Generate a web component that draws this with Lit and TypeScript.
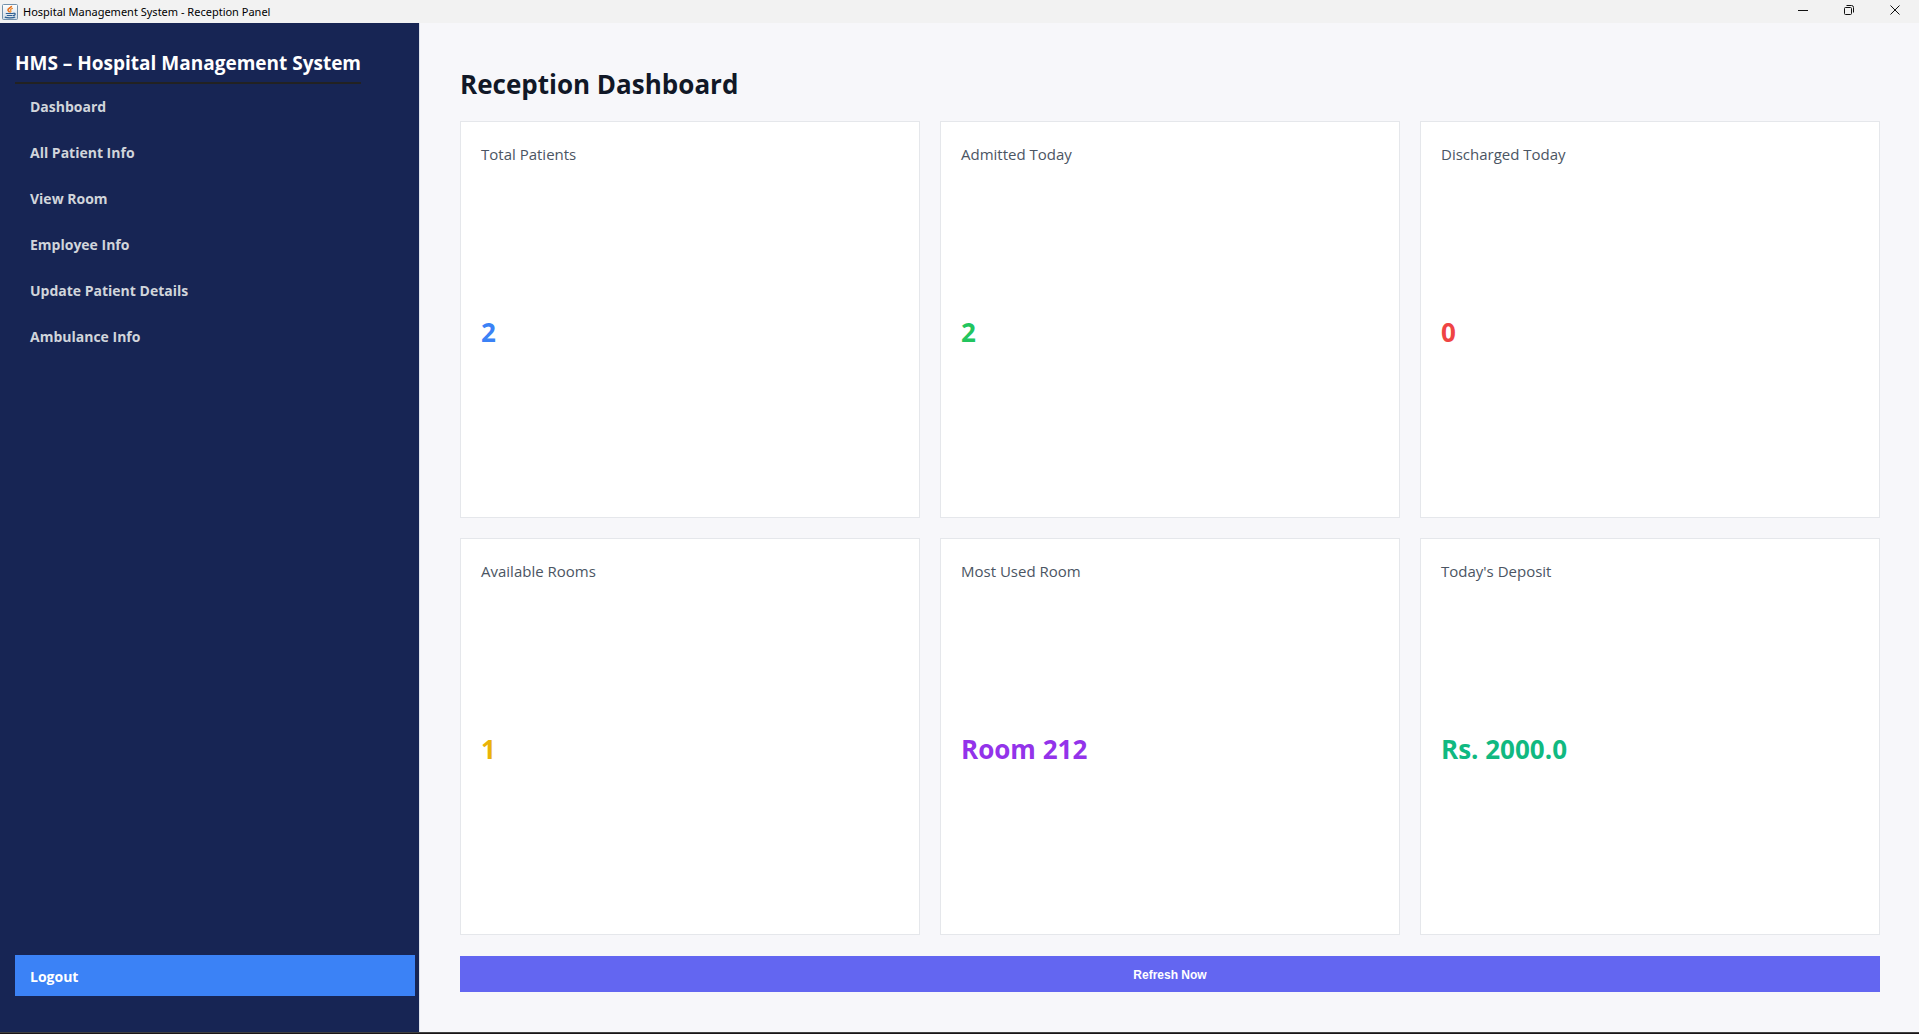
import { LitElement, html, css, svg } from "lit";
import { customElement, state } from "lit/decorators.js";
import { classMap } from "lit/directives/class-map.js";

interface Stat {
  label: string;
  value: string;
  tone: string;
}

const NAV = [
  "Dashboard",
  "All Patient Info",
  "View Room",
  "Employee Info",
  "Update Patient Details",
  "Ambulance Info",
];

const STATS: Stat[] = [
  { label: "Total Patients", value: "2", tone: "blue" },
  { label: "Admitted Today", value: "2", tone: "green" },
  { label: "Discharged Today", value: "0", tone: "red" },
  { label: "Available Rooms", value: "1", tone: "yellow" },
  { label: "Most Used Room", value: "Room 212", tone: "purple" },
  { label: "Today's Deposit", value: "Rs. 2000.0", tone: "emerald" },
];

const CONTROLS = [
  { name: "Minimize", shape: svg`<path d="M0 5.5H10" />` },
  {
    name: "Restore",
    shape: svg`<rect x="0.5" y="2.5" width="7" height="7" rx="1" /><path d="M2.5 0.5H7.5A2 2 0 0 1 9.5 2.5V7.5" />`,
  },
  { name: "Close", shape: svg`<path d="M0.5 0.5L9.5 9.5M9.5 0.5L0.5 9.5" />` },
];

@customElement("window-bar")
export class WindowBar extends LitElement {
  static styles = css`
    :host {
      display: flex;
      align-items: center;
      height: 23px;
      padding: 0 1px 0 2px;
      background: #f2f2f2;
      color: #000;
      font: 11px/16px "Noto Sans", "Open Sans", sans-serif;
    }
    .icon {
      flex: none;
      width: 16px;
      height: 16px;
      margin-right: 5px;
    }
    .title {
      flex: 1;
    }
    .control {
      display: flex;
      align-items: center;
      align-self: flex-start;
      justify-content: center;
      width: 46px;
      height: 20px;
      padding: 0;
      border: 0;
      background: none;
      color: #111;
    }
    .glyph {
      width: 10px;
      height: 10px;
      fill: none;
      stroke: currentColor;
    }
  `;

  render() {
    return html`
      <svg class="icon" viewBox="0 0 16 16" aria-hidden="true">
        <defs>
          <linearGradient id="plate" x1="0" y1="0" x2="0" y2="1">
            <stop offset="0" stop-color="#ffffff" />
            <stop offset="1" stop-color="#cfdbe6" />
          </linearGradient>
        </defs>
        <rect x="0.5" y="0.5" width="15" height="15" rx="1" fill="url(#plate)" stroke="#7391ab" />
        <path d="M9.5 1.8C9.8 3.8 5.4 4.2 6 6.2C6.4 7.2 7.4 7.4 7.3 8.4" fill="none" stroke="#e8701a" stroke-width="1.6" />
        <path d="M10.9 4.2C8.8 4.9 8 5.6 8.8 6.6C9.3 7.3 8.9 7.9 8.3 8.5" fill="none" stroke="#ee8a2c" stroke-width="1.2" />
        <path d="M3.8 9.5H11M4.8 11.5H10.5M11 9.4C14 8.6 13.8 11.4 11 11.7" fill="none" stroke="#2f6093" stroke-width="1.2" />
        <path d="M2.8 13.2C5 14.2 11 14.2 13.2 13" fill="none" stroke="#2f6093" stroke-width="1.3" />
      </svg>
      <span class="title">Hospital Management System - Reception Panel</span>
      ${CONTROLS.map(
        (c) => html`<button class="control" type="button" aria-label=${c.name}>
          <svg class="glyph" viewBox="0 0 10 10" aria-hidden="true">${c.shape}</svg>
        </button>`,
      )}
    `;
  }
}

@customElement("stat-card")
export class StatCard extends LitElement {
  static properties = { stat: { attribute: false } };
  declare stat: Stat;

  static styles = css`
    :host {
      display: grid;
      grid-template-rows: 24px 1fr;
      padding: 20px;
      border: 1px solid #e5e7eb;
      background: #fff;
    }
    .label {
      margin: 0;
      color: #4b5563;
      font-size: 15px;
      line-height: 24px;
      font-weight: 400;
    }
    .value {
      align-self: center;
      margin: 0;
      font-size: 26px;
      line-height: 36px;
      font-weight: 700;
    }
    .blue { color: #3b82f6; }
    .green { color: #22c55e; }
    .red { color: #ef4444; }
    .yellow { color: #eab308; }
    .purple { color: #9333ea; }
    .emerald { color: #10b981; }
  `;

  render() {
    return html`
      <h2 class="label">${this.stat.label}</h2>
      <p class=${classMap({ value: true, [this.stat.tone]: true })}>${this.stat.value}</p>
    `;
  }
}

@customElement("app-root")
export class AppRoot extends LitElement {
  @state() private active = "Dashboard";

  static styles = css`
    :host {
      display: flex;
      flex-direction: column;
      box-sizing: border-box;
      min-height: 100vh;
      border-bottom: 1px solid #1a1617;
      background: #f7f7fa;
      font-family: "Open Sans", "Noto Sans", sans-serif;
    }
    .body {
      flex: 1;
      display: flex;
      border-bottom: 1px solid #3f3f3f;
    }
    .sidebar {
      flex: none;
      display: flex;
      flex-direction: column;
      align-items: flex-start;
      box-sizing: border-box;
      width: 420px;
      padding: 22px 4px 36px 15px;
      border-right: 1px solid #dfe3ec;
      background: #172554;
    }
    .brand {
      margin: 0;
      padding-bottom: 1px;
      border-bottom: 2px solid #222;
      color: #fff;
      font-size: 19px;
      line-height: 36px;
      font-weight: 700;
    }
    .nav {
      display: flex;
      flex-direction: column;
      align-self: stretch;
    }
    .link {
      padding: 0 15px;
      color: #d1d5db;
      font-size: 14px;
      line-height: 46px;
      font-weight: 700;
      text-decoration: none;
    }
    .logout {
      align-self: stretch;
      height: 41px;
      margin-top: auto;
      padding: 2px 15px 0;
      border: 0;
      background: #3b82f6;
      color: #fff;
      font: 700 14px/20px "Open Sans", "Noto Sans", sans-serif;
      text-align: left;
    }
    .main {
      flex: 1;
      display: flex;
      flex-direction: column;
      min-width: 0;
      padding: 40px 39px 40px 40px;
    }
    .heading {
      margin: 0 0 16px;
      color: #111827;
      font-size: 26px;
      line-height: 42px;
      font-weight: 700;
    }
    .cards {
      flex: 1;
      display: grid;
      grid-template-columns: repeat(3, 1fr);
      grid-auto-rows: 1fr;
      gap: 20px;
    }
    .refresh {
      height: 36px;
      margin-top: 21px;
      padding: 2px 0 0;
      border: 0;
      background: #6366f1;
      color: #fff;
      font: 700 12px/16px "Liberation Sans", Arial, sans-serif;
    }
  `;

  private select(e: Event, item: string) {
    e.preventDefault();
    this.active = item;
  }

  render() {
    return html`
      <window-bar></window-bar>
      <div class="body">
        <aside class="sidebar">
          <p class="brand">HMS – Hospital Management System</p>
          <nav class="nav">
            ${NAV.map(
              (item) => html`<a
                class="link"
                href="#"
                aria-current=${item === this.active ? "page" : "false"}
                @click=${(e: Event) => this.select(e, item)}
                >${item}</a
              >`,
            )}
          </nav>
          <button class="logout" type="button">Logout</button>
        </aside>
        <main class="main">
          <h1 class="heading">Reception Dashboard</h1>
          <section class="cards">
            ${STATS.map((s) => html`<stat-card .stat=${s}></stat-card>`)}
          </section>
          <button class="refresh" type="button">Refresh Now</button>
        </main>
      </div>
    `;
  }
}
